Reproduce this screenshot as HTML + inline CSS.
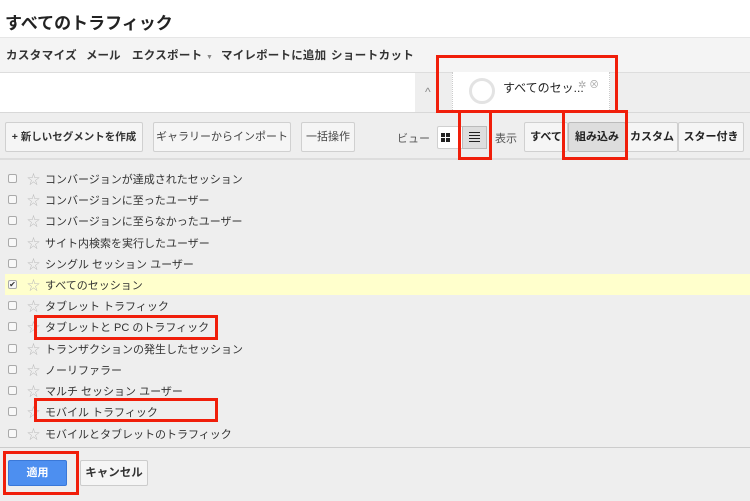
<!DOCTYPE html>
<html><head><meta charset="utf-8"><style>
*{margin:0;padding:0;box-sizing:border-box}
body{width:750px;height:501px;overflow:hidden;background:#eee;font-family:"Liberation Sans","Noto Sans CJK JP",sans-serif;position:relative;color:#333}
.abs{position:absolute;white-space:nowrap}
.title{left:0;top:0;width:750px;height:37px;background:#fff;font-size:17px;font-weight:bold;padding:9px 0 0 5px;color:#222}
.tb{left:0;top:37px;width:750px;height:35px;background:#f4f4f4;border-top:1px solid #e6e6e6;font-size:11.5px;font-weight:bold;color:#333}
.tb span{position:absolute;top:9px}
.wh{left:0;top:72px;width:415px;height:40px;background:#fff;border-top:1px solid #ddd}
.tabr{left:415px;top:72px;width:335px;height:40px;background:#eee;border-top:1px solid #ddd}
.seg{left:452px;top:72px;width:158px;height:40px;background:#fff;border-left:1px dotted #ccc;border-right:1px dotted #ccc}
.bar2{left:0;top:112px;width:750px;height:48px;background:#eee;border-top:1px solid #d8d8d8;border-bottom:2px solid #ddd}
.btn{position:absolute;white-space:nowrap;overflow:hidden;background:#f5f5f5;border:1px solid #d0d0d0;border-radius:2px;font-size:11px;color:#444;text-align:center;line-height:28px;height:30px;top:122px}
.red{position:absolute;border:3px solid #f01e0a}
.row{position:absolute;left:5px;width:745px;height:21px;font-size:11px;color:#333;white-space:nowrap}
.row .cb{position:absolute;left:3px;top:6px;width:9px;height:9px;border:1px solid #aaa;border-radius:2px;background:#f8f8f8}
.row .st{position:absolute;left:22px;top:1px;color:#bbb;font-size:13px;line-height:21px}
.row .t{position:absolute;left:40px;top:3px}
.bot{left:0;top:447px;width:750px;height:54px;background:#eee;border-top:1px solid #ccc}
</style></head><body>
<div class="abs title">すべてのトラフィック</div>
<div class="abs tb"><span style="left:6px;letter-spacing:0.4px">カスタマイズ</span><span style="left:86px">メール</span><span style="left:132px;letter-spacing:0.3px">エクスポート <small style="font-size:7px;color:#888">▼</small></span><span style="left:221px;letter-spacing:0.2px">マイレポートに追加</span><span style="left:331px;letter-spacing:0.4px">ショートカット</span></div>
<div class="abs wh"></div>
<div class="abs tabr"><span class="abs" style="left:10px;top:12px;color:#888;font-size:12px">^</span></div>
<div class="abs seg">
<div class="abs" style="left:16px;top:6px;width:26px;height:26px;border:3px solid #e3e3e3;border-radius:50%"></div>
<div class="abs" style="left:50px;top:7px;font-size:12px;color:#222">すべてのセッ...</div>
<div class="abs" style="left:125px;top:4px;font-size:10px;color:#aaa">✲ ⊗</div>
</div>
<div class="abs bar2"></div>
<div class="btn" style="left:5px;width:138px;font-weight:bold;color:#333;font-size:10.5px">+ 新しいセグメントを作成</div>
<div class="btn" style="left:153px;width:138px">ギャラリーからインポート</div>
<div class="btn" style="left:301px;width:54px">一括操作</div>
<div class="abs" style="left:397px;top:130px;font-size:11px;color:#555">ビュー</div>
<div class="btn" style="left:437px;width:50px;top:126px;height:23px;background:#fff"></div>
<div class="abs" style="left:441px;top:133px;width:4px;height:4px;background:#222;box-shadow:5px 0 #222,0 5px #222,5px 5px #222"></div>
<div class="abs" style="left:462px;top:126px;width:25px;height:23px;background:#ddd;border:1px solid #bbb"></div>
<div class="abs" style="left:469px;top:132px;width:11px;height:10px;background:repeating-linear-gradient(0deg,#222 0 1px,transparent 1px 3px)"></div>
<div class="abs" style="left:495px;top:130px;font-size:11px;color:#555">表示</div>
<div class="btn" style="left:524px;width:44px;font-weight:bold;color:#222">すべて</div>
<div class="btn" style="left:568px;width:58px;font-weight:bold;color:#222;background:#ddd;border-color:#bbb">組み込み</div>
<div class="btn" style="left:626px;width:52px;font-weight:bold;color:#222">カスタム</div>
<div class="btn" style="left:678px;width:66px;font-weight:bold;color:#222">スター付き</div>

<div class="row" style="top:168px"><div class="cb"></div><div class="st">☆</div><div class="t">コンバージョンが達成されたセッション</div></div>
<div class="row" style="top:189px"><div class="cb"></div><div class="st">☆</div><div class="t">コンバージョンに至ったユーザー</div></div>
<div class="row" style="top:210px"><div class="cb"></div><div class="st">☆</div><div class="t">コンバージョンに至らなかったユーザー</div></div>
<div class="row" style="top:232px"><div class="cb"></div><div class="st">☆</div><div class="t">サイト内検索を実行したユーザー</div></div>
<div class="row" style="top:253px"><div class="cb"></div><div class="st">☆</div><div class="t">シングル セッション ユーザー</div></div>
<div class="row" style="top:274px;background:#ffffcc"><div class="cb" style="font-size:8px;line-height:7px;text-align:center">✔</div><div class="st">☆</div><div class="t">すべてのセッション</div></div>
<div class="row" style="top:295px"><div class="cb"></div><div class="st">☆</div><div class="t">タブレット トラフィック</div></div>
<div class="row" style="top:316px"><div class="cb"></div><div class="st">☆</div><div class="t">タブレットと PC のトラフィック</div></div>
<div class="row" style="top:338px"><div class="cb"></div><div class="st">☆</div><div class="t">トランザクションの発生したセッション</div></div>
<div class="row" style="top:359px"><div class="cb"></div><div class="st">☆</div><div class="t">ノーリファラー</div></div>
<div class="row" style="top:380px"><div class="cb"></div><div class="st">☆</div><div class="t">マルチ セッション ユーザー</div></div>
<div class="row" style="top:401px"><div class="cb"></div><div class="st">☆</div><div class="t">モバイル トラフィック</div></div>
<div class="row" style="top:423px"><div class="cb"></div><div class="st">☆</div><div class="t">モバイルとタブレットのトラフィック</div></div>

<div class="abs bot"></div>
<div class="abs" style="left:8px;top:460px;width:59px;height:26px;background:#4d8ff0;border:1px solid #3a78d8;border-radius:2px;color:#fff;font-size:11px;font-weight:bold;text-align:center;line-height:24px">適用</div>
<div class="abs" style="left:80px;top:460px;width:68px;height:26px;background:#f5f5f5;border:1px solid #ccc;border-radius:2px;color:#333;font-size:11.5px;font-weight:bold;text-align:center;line-height:24px">キャンセル</div>

<div class="red" style="left:436px;top:55px;width:182px;height:58px"></div>
<div class="red" style="left:458px;top:110px;width:34px;height:50px"></div>
<div class="red" style="left:562px;top:110px;width:66px;height:50px"></div>
<div class="red" style="left:34px;top:315px;width:184px;height:25px"></div>
<div class="red" style="left:34px;top:398px;width:184px;height:24px"></div>
<div class="red" style="left:3px;top:451px;width:76px;height:44px"></div>
</body></html>
